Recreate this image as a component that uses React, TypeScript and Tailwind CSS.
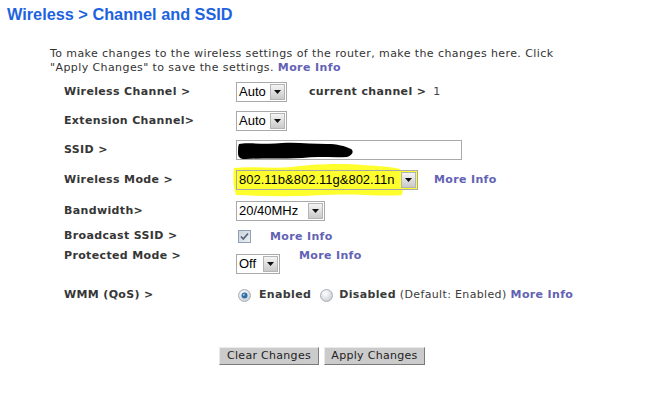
import React from "react";

const V = "font-['DejaVu_Sans',Verdana,sans-serif]";

function Arrow() {
  return (
    <div className="flex h-[16px] w-[15px] items-center justify-center border border-[#b4b4b4] bg-gradient-to-b from-[#f4f4f4] to-[#c9c9c9]">
      <svg width="7" height="4" viewBox="0 0 7 4">
        <path d="M0 0 H7 L3.5 4 Z" fill="#111" />
      </svg>
    </div>
  );
}

function Sel({ text, className, bg }: { text: string; className: string; bg?: string }) {
  return (
    <div className={`flex h-[20px] items-center justify-between border border-[#a9a9a9] pr-[1px] ${bg ?? "bg-white"} ${className}`}>
      <span className="pl-[2px] font-['Liberation_Sans',Arial,sans-serif] text-[13px] leading-[16px] tracking-normal text-black">{text}</span>
      <Arrow />
    </div>
  );
}

function More({ className }: { className?: string }) {
  return <span className={`font-bold text-[#6262b4] ${className ?? ""}`}>More Info</span>;
}

function Label({ children }: { children: React.ReactNode }) {
  return <div className="w-[172px] shrink-0 font-bold text-[#363636]">{children}</div>;
}

function Radio({ on }: { on: boolean }) {
  return (
    <svg width="13" height="13" viewBox="0 0 13 13">
      <defs>
        <radialGradient id={on ? "ro" : "rf"} cx="0.4" cy="0.35" r="0.7">
          <stop offset="0" stopColor="#ffffff" />
          <stop offset="1" stopColor="#c8ccd0" />
        </radialGradient>
      </defs>
      <circle cx="6.5" cy="6.5" r="6" fill={`url(#${on ? "ro" : "rf"})`} stroke="#a8b0b8" />
      {on && <circle cx="6.5" cy="6.5" r="3" fill="#2f6fa8" />}
      {on && <circle cx="5.8" cy="5.8" r="1" fill="#9fd0f0" />}
    </svg>
  );
}

export default function App() {
  return (
    <div className={`relative h-[401px] w-[664px] overflow-hidden bg-white ${V} text-[11px] tracking-[0.35px] text-[#3a3a3a]`}>
      <div className="pl-[7px] pt-[5px] font-['Liberation_Sans',Arial,sans-serif] text-[16.3px] font-bold leading-[19px] tracking-normal text-[#1d63e0]">
        Wireless &gt; Channel and SSID
      </div>

      <div className="ml-[50px] mt-[23px] w-[580px] leading-[14px] tracking-[0.41px] text-[#333]">
        To make changes to the wireless settings of the router, make the changes here. Click
        <br />
        "Apply Changes" to save the settings. <More />
      </div>

      <div className="ml-[64px] mt-[5px] flex flex-col">
        <div className="flex h-[24px] items-center">
          <Label>Wireless Channel &gt;</Label>
          <Sel text="Auto" className="w-[51px]" />
          <span className="ml-[22px] font-bold text-[#363636]">current channel &gt;</span>
          <span className="ml-[7px] text-[#444]">1</span>
        </div>
        <div className="mt-[5px] flex h-[24px] items-center">
          <Label>Extension Channel&gt;</Label>
          <Sel text="Auto" className="w-[51px]" />
        </div>
        <div className="mt-[5px] flex h-[24px] items-center">
          <Label>SSID &gt;</Label>
          <div className="relative h-[20px] w-[226px] border border-[#a9a9a9] bg-white">
            <svg className="absolute left-0 top-0" width="120" height="19" viewBox="0 0 120 19">
              <path
                d="M2 3 C10 1 30 4 45 2 C60 1 75 3 90 3 C100 3 108 5 114 8 C117 10 116 14 110 16 C95 17 80 15 65 17 C45 18 25 17 8 18 C3 18 1 16 1 12 C1 8 1 5 2 3 Z"
                fill="#000"
              />
            </svg>
          </div>
        </div>
        <div className="relative mt-[6px] flex h-[24px] items-center">
          <Label>Wireless Mode &gt;</Label>
          <svg className="absolute left-[168px] top-[-6px]" width="176" height="36" viewBox="0 0 176 36">
            <path
              d="M2 6 C20 4 40 7 60 5 C80 2 110 1 130 3 C150 4 160 5 168 7 C172 12 172 22 170 33 C150 35 120 31 90 33 C60 35 30 34 4 33 C1 24 1 14 2 6 Z"
              fill="#ffff2e"
            />
          </svg>
          <div className="relative flex items-center">
            <Sel text="802.11b&802.11g&802.11n" className="w-[182px]" bg="bg-[#ffff2e]" />
            <More className="ml-[16px]" />
          </div>
        </div>
        <div className="mt-[7px] flex h-[24px] items-center">
          <Label>Bandwidth&gt;</Label>
          <Sel text="20/40MHz" className="w-[89px]" />
        </div>
        <div className="mt-[2px] flex h-[22px] items-center">
          <Label>Broadcast SSID &gt;</Label>
          <svg className="ml-[2px]" width="13" height="13" viewBox="0 0 13 13">
            <defs>
              <linearGradient id="cb" x1="0" y1="0" x2="1" y2="1">
                <stop offset="0" stopColor="#c9d2dc" />
                <stop offset="1" stopColor="#eef1f4" />
              </linearGradient>
            </defs>
            <rect x="0.5" y="0.5" width="12" height="12" fill="url(#cb)" stroke="#8f9fb4" />
            <path d="M3 6.5 L5.3 9 L10 3.5" stroke="#56647e" strokeWidth="1.8" fill="none" />
          </svg>
          <More className="ml-[19px] mt-[3px]" />
        </div>
        <div className="flex h-[36px] items-start">
          <div className="mt-[1px]">
            <Label>Protected Mode &gt;</Label>
          </div>
          <div className="mt-[7px]">
            <Sel text="Off" className="w-[44px]" />
          </div>
          <More className="ml-[19px] mt-[1px]" />
        </div>
        <div className="flex h-[24px] items-center">
          <Label>WMM (QoS) &gt;</Label>
          <div className="ml-[2px] flex items-center">
            <Radio on />
            <span className="ml-[8px] font-bold">Enabled</span>
            <span className="ml-[9px]"><Radio on={false} /></span>
            <span className="ml-[6px] font-bold">Disabled</span>
            <span className="ml-[4px]">(Default: Enabled)</span>
            <More className="ml-[4px]" />
          </div>
        </div>
      </div>

      <div className="ml-[219px] mt-[40px] flex gap-[5px]">
        <button className="h-[18px] w-[100px] border border-[#eaeaea] border-b-[#7a7a7a] border-r-[#7a7a7a] bg-[#cbcbcb] text-[11px] leading-[14px] tracking-[0.3px] text-[#222]">
          Clear Changes
        </button>
        <button className="h-[18px] w-[101px] border border-[#eaeaea] border-b-[#7a7a7a] border-r-[#7a7a7a] bg-[#cbcbcb] text-[11px] leading-[14px] tracking-[0.3px] text-[#222]">
          Apply Changes
        </button>
      </div>
    </div>
  );
}
